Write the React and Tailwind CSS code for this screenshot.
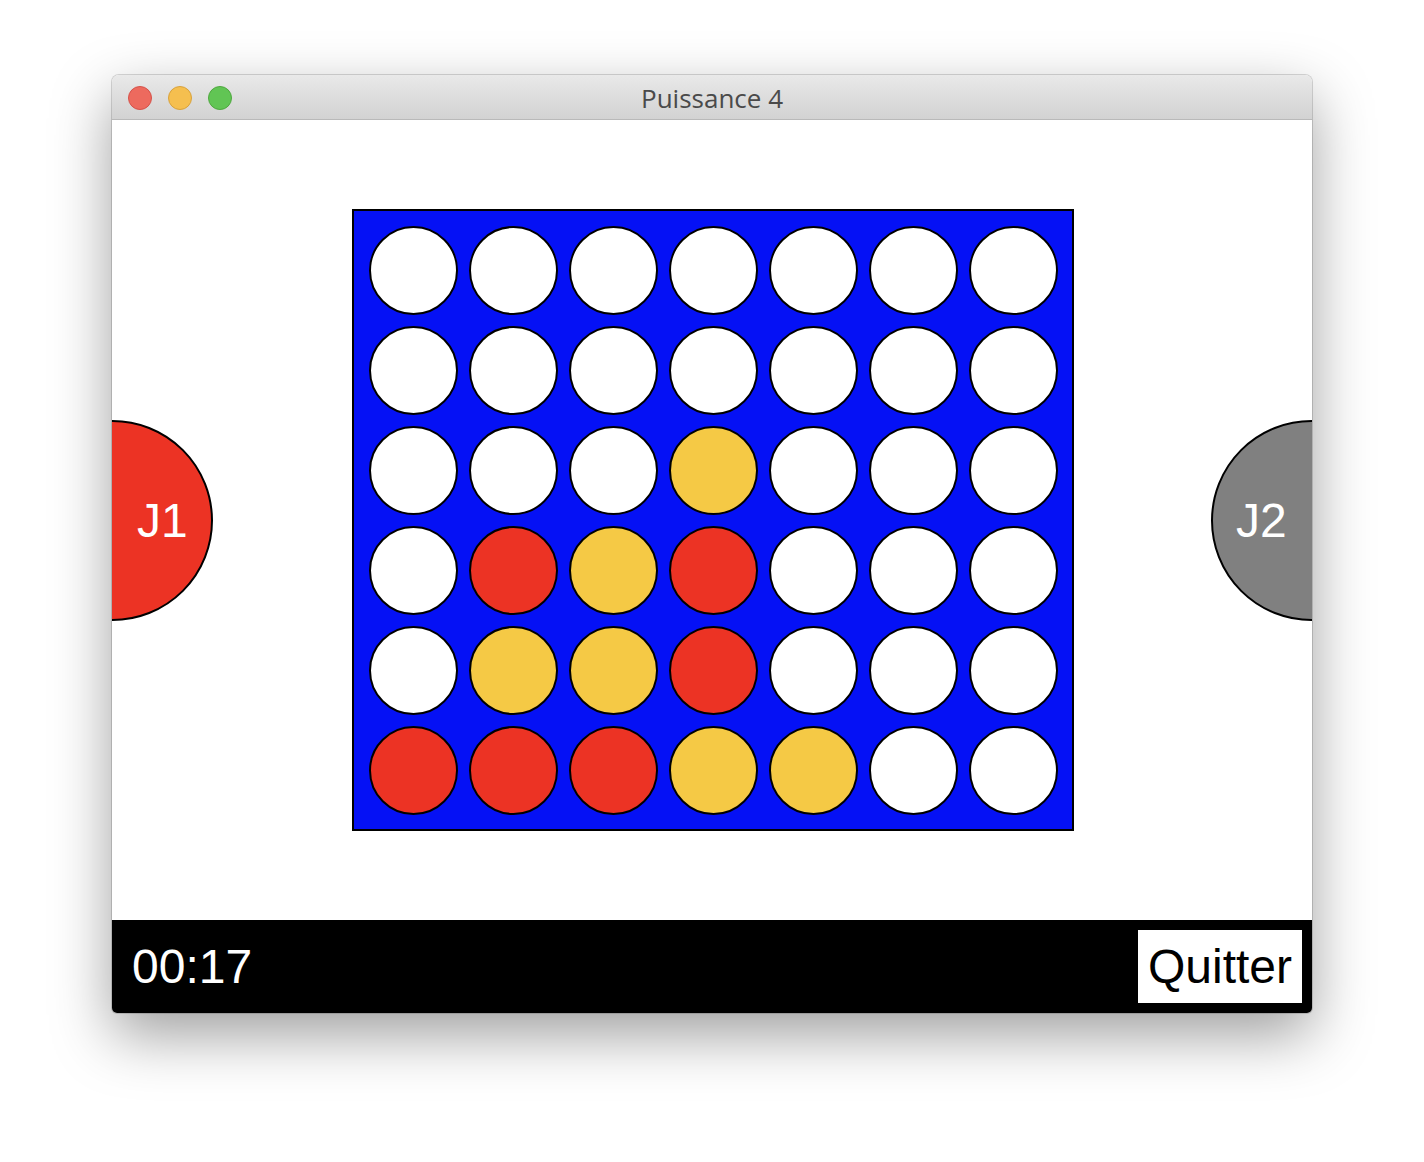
import React from "react";

const board = [
  ["w", "w", "w", "w", "w", "w", "w"],
  ["w", "w", "w", "w", "w", "w", "w"],
  ["w", "w", "w", "y", "w", "w", "w"],
  ["w", "r", "y", "r", "w", "w", "w"],
  ["w", "y", "y", "r", "w", "w", "w"],
  ["r", "r", "r", "y", "y", "w", "w"],
];

function Cell({ v }) {
  const color =
    v === "r" ? "bg-[#ec3324]" : v === "y" ? "bg-[#f5c945]" : "bg-white";
  return (
    <div className="w-[100px] h-[100px] flex items-center justify-center">
      <div className={`w-[89px] h-[89px] rounded-full border-2 border-black ${color}`} />
    </div>
  );
}

export default function App() {
  return (
    <div
      className="w-[1424px] h-[1162px] bg-white pt-[75px] pl-[112px]"
      style={{ fontFamily: '"Liberation Sans", Arial, sans-serif' }}
    >
      <div className="w-[1200px] rounded-t-[7px] rounded-b-[5px] overflow-hidden shadow-[0_22px_60px_rgba(0,0,0,0.38)] ring-1 ring-black/15">
        {/* Title bar */}
        <div className="relative h-[45px] pt-[2px] bg-gradient-to-b from-[#e9e9e9] to-[#d2d2d2] border-b border-[#b9b9b9] flex items-center justify-center">
          <div className="absolute left-[16px] top-[11px] flex gap-[16px]">
            <div className="w-[24px] h-[24px] rounded-full bg-[#ed6a5e] border border-[#d5524a]" />
            <div className="w-[24px] h-[24px] rounded-full bg-[#f5bf4f] border border-[#d8a23d]" />
            <div className="w-[24px] h-[24px] rounded-full bg-[#61c554] border border-[#4fa83f]" />
          </div>
          <span className="text-[26px] text-[#4a4a4a] leading-none" style={{ fontFamily: '"Open Sans", "Liberation Sans", sans-serif' }}>
            Puissance 4
          </span>
        </div>

        {/* Content */}
        <div className="relative h-[800px] pl-[2px] bg-white flex items-center justify-center overflow-hidden">
          <div className="border-2 border-black bg-[#0511f5] p-[9px] grid grid-cols-7">
            {board.flat().map((v, i) => (
              <Cell key={i} v={v} />
            ))}
          </div>

          <div className="absolute left-[-100px] top-[300px] w-[201px] h-[201px] rounded-full bg-[#ec3324] border-2 border-black flex items-center">
            <span className="ml-[123px] text-white text-[48px] leading-none">J1</span>
          </div>
          <div className="absolute right-[-100px] top-[300px] w-[201px] h-[201px] rounded-full bg-[#808080] border-2 border-black flex items-center">
            <span className="ml-[23px] text-white text-[48px] leading-none">J2</span>
          </div>
        </div>

        {/* Bottom bar */}
        <div className="h-[93px] bg-black flex items-center justify-between pl-[20px] pr-[10px]">
          <span className="text-white text-[48px] leading-none">00:17</span>
          <div className="w-[164px] h-[73px] bg-white flex items-center justify-center">
            <span className="text-black text-[48px] leading-none">Quitter</span>
          </div>
        </div>
      </div>
    </div>
  );
}
